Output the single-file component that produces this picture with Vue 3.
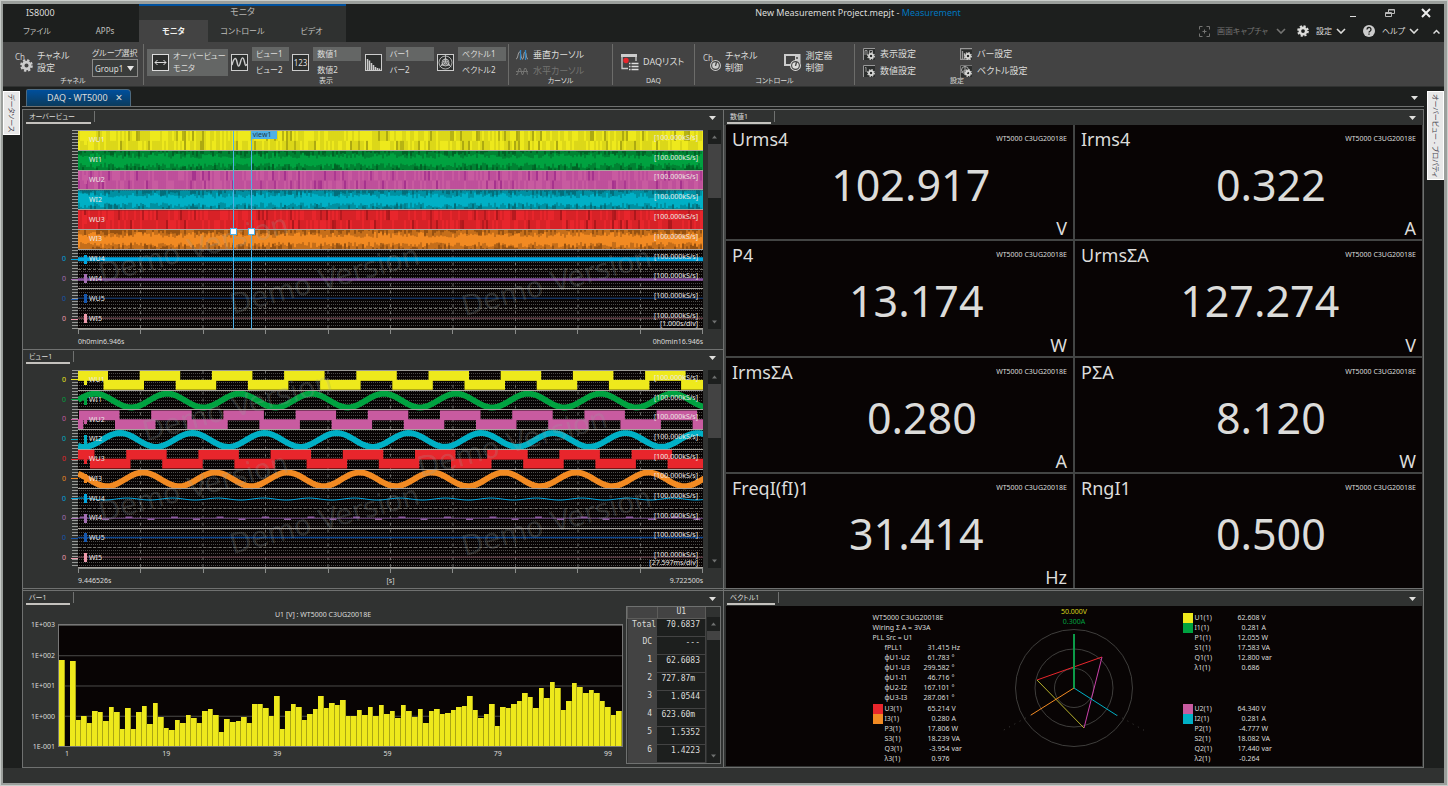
<script setup>
import { ref } from 'vue'

const group = ref('Group1')
const activeTab = ref('モニタ')

const contextTabs = ['モニタ', 'コントロール', 'ビデオ']

const viewPairs = [
  { icon: 'wave', names: ['ビュー1', 'ビュー2'], size: 'narrow' },
  { icon: 'digits', names: ['数値1', '数値2'], size: 'wide' },
  { icon: 'bars', names: ['バー1', 'バー2'], size: 'wide' },
  { icon: 'vector', names: ['ベクトル1', 'ベクトル2'], size: 'wide' },
]

const channels = [
  { name: 'WU1', color: '#eee91c', dark: '#77740a' },
  { name: 'WI1', color: '#00a240', dark: '#003c18' },
  { name: 'WU2', color: '#c85ba0', dark: '#8a1280' },
  { name: 'WI2', color: '#00b0c6', dark: '#06484e' },
  { name: 'WU3', color: '#e8262c', dark: '#7c0d10' },
  { name: 'WI3', color: '#f28a22', dark: '#5e2f08' },
  { name: 'WU4', color: '#00a6e0', dark: '#0080b4' },
  { name: 'WI4', color: '#a56fb4', dark: '#6b3a86' },
  { name: 'WU5', color: '#1557b0', dark: '#10305e' },
  { name: 'WI5', color: '#f09aac', dark: '#93606a' },
]

const ROW = 20
const PERIOD = 72.2

// repeatable noise so the overview looks the same on each load
let seed = 7
const noise = () => {
  seed = (seed * 16807) % 2147483647
  return seed / 2147483647
}

const overviewBands = channels.slice(0, 6).map((ch, i) => {
  const top = i * ROW
  const isCurrent = i % 2 === 1
  let soft = ''
  let hard = ''
  for (let x = 1; x < 625; x += 2) {
    if (isCurrent) {
      soft += `M${x} ${top}v${(2 + noise() * 6).toFixed(1)}M${x} ${top + ROW}v-${(2 + noise() * 6).toFixed(1)}`
      if (noise() < 0.6) hard += `M${x} ${top}v${(noise() * 6).toFixed(1)}`
      if (noise() < 0.5) hard += `M${x} ${top + ROW}v-${(noise() * 7).toFixed(1)}`
    } else {
      if (noise() < 0.6) soft += `M${x} ${top}v10`
      if (noise() < 0.6) soft += `M${x} ${top + 10}v10`
      if (noise() < 0.1) hard += `M${x} ${top}v10`
      if (noise() < 0.1) hard += `M${x} ${top + 10}v10`
    }
  }
  return { ...ch, top, soft, hard, softness: isCurrent ? 0.6 : 0.3 }
})

const squareWave = (first, row) => {
  const bars = []
  for (let x = first; x < 625; x += PERIOD) {
    bars.push({ x, y: row * ROW, h: 10 })
    bars.push({ x: x + 36, y: row * ROW + 9, h: 10 })
  }
  return bars
}

const sineWave = (peak, row, amp, period = PERIOD) => {
  let d = ''
  for (let x = 0; x <= 627; x += 3) {
    const y = row * ROW + 10 - amp * Math.cos((2 * Math.PI * (x - peak)) / period)
    d += `${x ? 'L' : 'M'}${x} ${y.toFixed(2)}`
  }
  return d
}

const squares = [
  { color: channels[0].color, bars: squareWave(-10.5, 0) },
  { color: channels[2].color, bars: squareWave(1 - PERIOD, 2) },
  { color: channels[4].color, bars: squareWave(-24, 4) },
]
const sines = [
  { color: channels[1].color, d: sineWave(17, 1, 7), w: 6 },
  { color: channels[3].color, d: sineWave(42, 3, 7), w: 6 },
  { color: channels[5].color, d: sineWave(65, 5, 7), w: 6 },
  { color: channels[6].color, d: sineWave(49, 6, 1, 45.5), w: 1 },
]
const pulses = Array.from({ length: 14 }, (_, i) => i * 45.5)

const plots = [
  { id: 'overview', title: 'オーバービュー', from: '0h0min6.946s', unit: '', to: '0h0min16.946s', div: '[1.000s/div]' },
  { id: 'view', title: 'ビュー1', from: '9.446526s', unit: '[s]', to: '9.722500s', div: '[27.597ms/div]' },
]

const readings = [
  { name: 'Urms4', value: '102.917', unit: 'V' },
  { name: 'Irms4', value: '0.322', unit: 'A' },
  { name: 'P4', value: '13.174', unit: 'W' },
  { name: 'UrmsΣA', value: '127.274', unit: 'V' },
  { name: 'IrmsΣA', value: '0.280', unit: 'A' },
  { name: 'PΣA', value: '8.120', unit: 'W' },
  { name: 'FreqI(fI)1', value: '31.414', unit: 'Hz' },
  { name: 'RngI1', value: '0.500', unit: '' },
]

// bar heights on the log axis, 375 = full scale
const harmonics = [
  267, 0, 264, 80, 94, 72, 109, 106, 78, 121, 105, 54, 117, 54, 106, 124, 68, 133, 91, 57,
  51, 81, 70, 97, 87, 72, 107, 114, 97, 43, 85, 73, 76, 91, 70, 129, 129, 118, 93, 156,
  54, 107, 130, 121, 81, 100, 115, 156, 118, 134, 127, 143, 93, 93, 112, 96, 121, 92, 127, 100,
  109, 88, 126, 110, 91, 115, 70, 109, 115, 98, 103, 111, 120, 124, 155, 112, 88, 100, 129, 62,
  121, 117, 129, 141, 164, 151, 119, 181, 148, 199, 181, 111, 138, 196, 184, 164, 175, 165, 141, 120,
  97, 109,
]

const orders = [
  ['Total', '70.6837'],
  ['DC', '---'],
  ['1', '62.6083'],
  ['2', '727.87m '],
  ['3', '1.0544'],
  ['4', '623.60m '],
  ['5', '1.5352'],
  ['6', '1.4223'],
]

const pll = [
  ['fPLL1', '31.415', 'Hz'],
  ['φU1-U2', '61.783', '°'],
  ['φU1-U3', '299.582', '°'],
  ['φU1-I1', '46.716', '°'],
  ['φU2-I2', '167.101', '°'],
  ['φU3-I3', '287.061', '°'],
]
const phase1 = [
  ['U1(1)', '62.608', 'V', '#eee91c'],
  ['I1(1)', '0.281', 'A', '#00a240'],
  ['P1(1)', '12.055', 'W'],
  ['S1(1)', '17.583', 'VA'],
  ['Q1(1)', '12.800', 'var'],
  ['λ1(1)', '0.686', ''],
]
const phase2 = [
  ['U2(1)', '64.340', 'V', '#c85ba0'],
  ['I2(1)', '0.281', 'A', '#00b0c6'],
  ['P2(1)', '-4.777', 'W'],
  ['S2(1)', '18.082', 'VA'],
  ['Q2(1)', '17.440', 'var'],
  ['λ2(1)', '-0.264', ''],
]
const phase3 = [
  ['U3(1)', '65.214', 'V', '#e8262c'],
  ['I3(1)', '0.280', 'A', '#f28a22'],
  ['P3(1)', '17.806', 'W'],
  ['S3(1)', '18.239', 'VA'],
  ['Q3(1)', '-3.954', 'var'],
  ['λ3(1)', '0.976', ''],
]
</script>

<template>
  <div class="frame">
    <svg class="defs" aria-hidden="true">
      <symbol id="gear" viewBox="0 0 16 16">
        <circle cx="8" cy="8" r="4.2" fill="none" stroke="currentColor" stroke-width="3.4" />
        <circle cx="8" cy="8" r="6.6" fill="none" stroke="currentColor" stroke-width="2.4" stroke-dasharray="2.9 2.28" />
      </symbol>
      <symbol id="knob" viewBox="0 0 16 16">
        <circle cx="8" cy="8" r="7.2" fill="#434343" stroke="currentColor" stroke-width="1.5" />
        <circle cx="8" cy="8" r="4.8" fill="currentColor" />
        <path d="M8 8.500L9.500 3" stroke="#434343" stroke-width="2" />
      </symbol>
      <symbol id="chevron" viewBox="0 0 10 6">
        <path d="M1 1l4 4 4-4" fill="none" stroke="currentColor" stroke-width="1.6" />
      </symbol>
      <symbol id="caret" viewBox="0 0 7 4"><path d="M0 0h7L3.5 4z" fill="currentColor" /></symbol>
    </svg>

    <div class="app">
      <header class="titlebar">
        <div class="tabs-plain">
          <span class="brand">IS8000</span>
          <button class="menu-tab">ファイル</button>
          <button class="menu-tab">APPs</button>
        </div>
        <div class="tabs-context">
          <span class="context-name">モニタ</span>
          <button
            v-for="tab in contextTabs"
            :key="tab"
            class="menu-tab"
            :class="{ active: tab === activeTab }"
            @click="activeTab = tab"
          >{{ tab }}</button>
        </div>
        <div class="title-area">
          <div class="title-row">
            <h1>New Measurement Project.mepjt - <em>Measurement</em></h1>
            <div class="window-buttons">
              <button aria-label="最小化">
                <svg width="10" height="10" viewBox="0 0 10 10"><path d="M1 8.500h6" stroke="#ddd" /></svg>
              </button>
              <button aria-label="元に戻す">
                <svg width="10" height="10" viewBox="0 0 10 10" fill="none" stroke="#bbb">
                  <path d="M.5 4.500h6v4h-6zM3.500 4v-2.500h6v4h-2.500M.5 5.500h6M3.500 2h6" />
                </svg>
              </button>
              <button aria-label="閉じる">
                <svg width="10" height="10" viewBox="0 0 10 10"><path d="M1 1l8 8M9 1l-8 8" stroke="#eee" stroke-width="2" /></svg>
              </button>
            </div>
          </div>
          <div class="tools-row">
            <button class="tool dim">
              <svg width="11" height="11" viewBox="0 0 11 11" fill="none" stroke="currentColor">
                <path d="M.5 3.500v-3h3M7.500.5h3v3M10.500 7.500v3h-3M3.500 10.500h-3v-3M5.500 3.500v4M3.500 5.500h4" />
              </svg>
              <span>画面キャプチャ</span>
              <svg class="chev far" width="10" height="6"><use href="#chevron" /></svg>
            </button>
            <button class="tool">
              <svg width="12" height="12"><use href="#gear" /></svg>
              <span>設定</span>
              <svg class="chev" width="10" height="6"><use href="#chevron" /></svg>
            </button>
            <button class="tool help">
              <svg width="12" height="12" viewBox="0 0 12 12">
                <circle cx="6" cy="6" r="6" fill="#ccc" />
                <path d="M4 4.500a2 2 0 1 1 3 1.700q-1 .6-1 1.300M6 8.500v1.300" fill="none" stroke="#1d1f1e" stroke-width="1.300" />
              </svg>
              <span>ヘルプ</span>
              <svg class="chev" width="10" height="6"><use href="#chevron" /></svg>
            </button>
            <button class="collapse" aria-label="リボンを折りたたむ">
              <svg width="7" height="5" viewBox="0 0 7 5"><path d="M.5 4.500l3-3 3 3" fill="none" stroke="#ddd" stroke-width="1.500" /></svg>
            </button>
          </div>
        </div>
      </header>

      <nav class="ribbon">
        <section class="group g-channel">
          <div class="items">
            <button class="big">
              <span class="ch-icon">
                <span>Ch</span>
                <svg width="13" height="13"><use href="#gear" /></svg>
              </span>
              <span>チャネル<br />設定</span>
            </button>
            <div class="field">
              <label for="group-select">グループ選択</label>
              <div class="select-wrap">
                <select id="group-select" v-model="group">
                  <option>Group1</option>
                  <option>Group2</option>
                </select>
                <svg width="7" height="5" viewBox="0 0 7 5"><path d="M0 0h7L3.500 5z" fill="#e6e6e6" /></svg>
              </div>
            </div>
          </div>
          <h2>チャネル</h2>
        </section>

        <section class="group g-display">
          <div class="items">
            <button class="big lit">
              <svg width="17" height="17" viewBox="0 0 17 17" fill="none" stroke="#ddd">
                <rect x=".5" y=".5" width="16" height="16" fill="#2c2e2d" />
                <path d="M3 8.500h11M5.500 6l-2.500 2.500 2.500 2.500M11.500 6l2.500 2.500-2.500 2.500" />
              </svg>
              <span>オーバービュー<br />モニタ</span>
            </button>
            <div v-for="pair in viewPairs" :key="pair.icon" class="pair">
              <svg width="17" height="17" viewBox="0 0 17 17" fill="none" stroke="#ccc">
                <rect x=".5" y=".5" width="16" height="16" fill="#2c2e2d" />
                <path v-if="pair.icon === 'wave'" d="M1 11C3 3 5 3 6 8s2 6 3.500 0 3-5 4 0 1.500 4 2.500 2" stroke-width="1.400" />
                <text v-else-if="pair.icon === 'digits'" x="8.500" y="11.500" class="digits">123</text>
                <path v-else-if="pair.icon === 'bars'" d="M2.500 16v-11M4.500 16v-9.500M6.500 16v-7M8.500 16v-5M10.500 16v-3M12.500 16v-2M14.500 16v-1.500" stroke-width="1.500" />
                <g v-else stroke-width=".8">
                  <circle cx="8.500" cy="8.500" r="6.500" />
                  <circle cx="8.500" cy="8.500" r="3.500" />
                  <circle cx="8.500" cy="8.500" r="1.300" />
                  <path d="M8.500 1v7.500L2.500 13M8.500 8.500l6 4.500M8.500 4l-4 7h8z" />
                </g>
              </svg>
              <div class="stack" :class="pair.size">
                <button class="lit">{{ pair.names[0] }}</button>
                <button>{{ pair.names[1] }}</button>
              </div>
            </div>
          </div>
          <h2>表示</h2>
        </section>

        <section class="group g-cursor">
          <div class="items rows">
            <button class="line">
              <svg width="12" height="10" viewBox="0 0 12 10" fill="none">
                <path d="M0 9c2 0 2-7 3.500-7S5 9 6.500 9 7.500 2 9 2s1 7 3 7" stroke="#aaa" />
                <path d="M4.500 0v10M9.500 0v10" stroke="#2f86c6" stroke-width="1.300" />
              </svg>垂直カーソル
            </button>
            <button class="line dim" disabled>
              <svg width="12" height="10" viewBox="0 0 12 10" fill="none" stroke="currentColor">
                <path d="M0 8.500h1.500L3 2.500h1.500L6 8.500h1L8.500 2.500H10l1.500 6M0 5.500h12" />
              </svg>水平カーソル
            </button>
          </div>
          <h2>カーソル</h2>
        </section>

        <section class="group g-daq">
          <div class="items">
            <button class="big">
              <svg width="18" height="17" viewBox="0 0 18 17" fill="none">
                <path d="M7 14.500H1V1h14v6" stroke="#ccc" stroke-width="1.300" />
                <path d="M0 1.500h16" stroke="#ccc" stroke-width="3" />
                <circle cx="5" cy="6.500" r="2.700" fill="#e8262c" />
                <path d="M8 9.500h1.500M10.500 9.500h7M8 12.500h1.500M10.500 12.500h7M8 15.500h1.500M10.500 15.500h7" stroke="#ddd" stroke-width="1.300" />
              </svg>
              <span>DAQリスト</span>
            </button>
          </div>
          <h2>DAQ</h2>
        </section>

        <section class="group g-control">
          <div class="items">
            <button class="big">
              <span class="ch-icon">
                <span>Ch</span>
                <svg width="11" height="11"><use href="#knob" /></svg>
              </span>
              <span>チャネル<br />制御</span>
            </button>
            <button class="big">
              <svg width="18" height="18" viewBox="0 0 18 18">
                <path d="M1 12V2h14.500v8M0 12h8" fill="none" stroke="#ccc" stroke-width="2" />
                <path d="M11 3h4v5h-4z" fill="#ccc" />
                <circle cx="13" cy="5" r="1" fill="#434343" />
                <svg x="6" y="7" width="11" height="11"><use href="#knob" /></svg>
              </svg>
              <span>測定器<br />制御</span>
            </button>
          </div>
          <h2>コントロール</h2>
        </section>

        <section class="group g-settings">
          <div class="items settings-grid">
            <button class="line">
              <svg width="12" height="12" viewBox="0 0 12 12">
                <path d="M0 0h12v12H0z" fill="#2c2e2d" />
                <path d="M.5 12V.5H12M2 7V2.500h2V7M6.500 4.500v-2h3v2" fill="none" stroke="#999" />
                <svg x="4" y="4" width="8" height="8"><use href="#gear" /></svg>
              </svg>表示設定
            </button>
            <button class="line">
              <svg width="12" height="12" viewBox="0 0 12 12">
                <path d="M0 0h12v12H0z" fill="#2c2e2d" />
                <path d="M.5 0V11.500H11M.5.5H12M2.500 11V3M4.500 11V5" fill="none" stroke="#999" stroke-width="1.300" />
                <svg x="4" y="4" width="8" height="8"><use href="#gear" /></svg>
              </svg>バー設定
            </button>
            <button class="line">
              <svg width="12" height="12" viewBox="0 0 12 12">
                <path d="M0 0h12v12H0z" fill="#2c2e2d" />
                <path d="M.5 12V.5H12M2 3l1-.7V7" fill="none" stroke="#999" />
                <svg x="4" y="4" width="8" height="8"><use href="#gear" /></svg>
              </svg>数値設定
            </button>
            <button class="line">
              <svg width="12" height="12" viewBox="0 0 12 12">
                <path d="M0 0h12v12H0z" fill="#2c2e2d" />
                <path d="M.5 12V.5H12" fill="none" stroke="#777" />
                <circle cx="5" cy="5" r="3.500" fill="none" stroke="#aaa" />
                <path d="M5 1v4L1.500 7.500M5 5l3 2" fill="none" stroke="#aaa" />
                <svg x="4" y="4" width="8" height="8"><use href="#gear" /></svg>
              </svg>ベクトル設定
            </button>
          </div>
          <h2>設定</h2>
        </section>
      </nav>

      <div class="workspace">
        <aside class="dock"><button>データソース</button></aside>

        <main class="center">
          <div class="doc-tabs">
            <div class="doc-tab">
              DAQ - WT5000
              <button aria-label="タブを閉じる">×</button>
            </div>
            <button class="caret-button" aria-label="タブ一覧"><svg width="7" height="4"><use href="#caret" /></svg></button>
          </div>

          <div class="panels">
            <section v-for="plot in plots" :key="plot.id" class="panel" :class="plot.id">
              <header class="panel-head">
                <h3>{{ plot.title }}</h3>
                <button class="caret-button" aria-label="メニュー"><svg width="7" height="4"><use href="#caret" /></svg></button>
              </header>
              <div class="plot-grid">
                <div class="zeros">
                  <span
                    v-for="(ch, i) in channels"
                    :key="ch.name"
                    :style="{ color: ch.color }"
                  ><b v-if="plot.id === 'view' || i > 5">0</b><i v-if="plot.id === 'view' || i > 5"></i></span>
                </div>
                <div class="plot">
                  <svg class="traces" viewBox="0 0 625 200" preserveAspectRatio="none" aria-hidden="true">
                    <path d="M62.500 0v200M125 0v200M187.500 0v200M250 0v200M312.500 0v200M375 0v200M437.500 0v200M500 0v200M562.500 0v200" stroke="#6a6a68" stroke-dasharray="3 4" />
                    <template v-if="plot.id === 'overview'">
                      <g v-for="band in overviewBands" :key="band.name">
                        <rect x="0" :y="band.top" width="625" height="20" :fill="band.color" />
                        <path :d="band.soft" :stroke="band.dark" :opacity="band.softness" />
                        <path :d="band.hard" :stroke="band.dark" opacity=".9" />
                      </g>
                      <path d="M0 129.500h625" stroke="#00a6e0" stroke-width="4" />
                      <path d="M0 150h625" stroke="#8b55a4" stroke-width="2.500" />
                      <path d="M0 169h625" stroke="#12305c" stroke-width="1.500" />
                      <path d="M0 189h625" stroke="#93606a" />
                    </template>
                    <template v-else>
                      <g v-for="square in squares" :key="square.color" :fill="square.color">
                        <rect v-for="(bar, i) in square.bars" :key="i" :x="bar.x" :y="bar.y" width="40.500" :height="bar.h" />
                      </g>
                      <path v-for="sine in sines" :key="sine.color" :d="sine.d" :stroke="sine.color" :stroke-width="sine.w" fill="none" />
                      <path d="M0 149.500h625" stroke="#77508a" />
                      <g stroke="#8d5ca0" stroke-width="1.500">
                        <path v-for="x in pulses" :key="x" :d="`M${x + 2} 148.500h7M${x + 24} 150.500h7`" />
                      </g>
                      <path d="M0 169h625" stroke="#0d448e" stroke-width="1.500" />
                      <path d="M0 189h625" stroke="#80505c" />
                    </template>
                  </svg>
                  <span class="mark m1" aria-hidden="true">Demo Version</span>
                  <span class="mark m2" aria-hidden="true">Demo Version</span>
                  <span class="mark m3" aria-hidden="true">Demo Version</span>
                  <span v-if="plot.id === 'view'" class="mark m4" aria-hidden="true">Demo Version</span>
                  <span v-if="plot.id === 'view'" class="mark m5" aria-hidden="true">Demo Version</span>
                  <div class="channel-rows">
                    <div v-for="ch in channels" :key="ch.name" class="channel">
                      <i :style="{ background: ch.color }"></i>
                      <span class="channel-name">{{ ch.name }}</span>
                      <span class="rate">[100.000kS/s]</span>
                    </div>
                  </div>
                  <span class="per-div">{{ plot.div }}</span>
                  <div v-if="plot.id === 'overview'" class="zoom-range">
                    <span>view1</span>
                    <i></i><i></i>
                  </div>
                </div>
                <div class="scroll">
                  <button aria-label="上へ"><svg width="5" height="4" class="flip"><use href="#caret" /></svg></button>
                  <div class="thumb"></div>
                  <button aria-label="下へ"><svg width="5" height="4"><use href="#caret" /></svg></button>
                </div>
                <div class="axis"><i v-for="n in 10" :key="n"></i></div>
                <div class="times">
                  <span>{{ plot.from }}</span><span>{{ plot.unit }}</span><span>{{ plot.to }}</span>
                </div>
              </div>
            </section>

            <section class="panel bar-panel">
              <header class="panel-head">
                <h3>バー1</h3>
                <button class="caret-button" aria-label="メニュー"><svg width="7" height="4"><use href="#caret" /></svg></button>
              </header>
              <div class="bar-body">
                <div class="chart">
                  <h4>U1 [V] : WT5000 C3UG20018E</h4>
                  <div class="y-axis">
                    <span>1E+003</span><span>1E+002</span><span>1E+001</span><span>1E+000</span><span>1E-001</span>
                  </div>
                  <div class="bars">
                    <i v-for="(h, i) in harmonics" :key="i" :style="{ height: h / 3.75 + '%' }"></i>
                  </div>
                  <div class="x-axis">
                    <span>1</span><span>19</span><span>39</span><span>59</span><span>79</span><span>99</span>
                  </div>
                </div>
                <div class="order-list">
                  <table>
                    <thead>
                      <tr><th></th><th>U1</th></tr>
                    </thead>
                    <tbody>
                      <tr v-for="row in orders" :key="row[0]">
                        <th>{{ row[0] }}</th>
                        <td>{{ row[1] }}</td>
                      </tr>
                    </tbody>
                  </table>
                  <div class="scroll">
                    <button aria-label="上へ"><svg width="5" height="4" class="flip"><use href="#caret" /></svg></button>
                    <div class="thumb short"></div>
                    <button aria-label="下へ"><svg width="5" height="4"><use href="#caret" /></svg></button>
                  </div>
                </div>
              </div>
            </section>

            <section class="panel numeric-panel">
              <header class="panel-head">
                <h3>数値1</h3>
                <button class="caret-button" aria-label="メニュー"><svg width="7" height="4"><use href="#caret" /></svg></button>
              </header>
              <div class="readings">
                <article v-for="r in readings" :key="r.name">
                  <h4>{{ r.name }}</h4>
                  <small>WT5000 C3UG20018E</small>
                  <strong>{{ r.value.padStart(9) }}</strong>
                  <span>{{ r.unit }}</span>
                </article>
              </div>
            </section>

            <section class="panel vector-panel">
              <header class="panel-head">
                <h3>ベクトル1</h3>
                <button class="caret-button" aria-label="メニュー"><svg width="7" height="4"><use href="#caret" /></svg></button>
              </header>
              <div class="vector-body">
                <div class="facts left">
                  <div>
                    <p>WT5000 C3UG20018E</p>
                    <p>Wiring Σ A = 3V3A</p>
                    <p>PLL Src = U1</p>
                    <p v-for="row in pll" :key="row[0]" class="fact">
                      <i></i><span>{{ row[0] }}</span><b>{{ row[1] }}</b><span>{{ row[2] }}</span>
                    </p>
                  </div>
                  <div>
                    <p v-for="row in phase3" :key="row[0]" class="fact">
                      <i :style="{ background: row[3] }"></i><span>{{ row[0] }}</span><b>{{ row[1] }}</b><span>{{ row[2] }}</span>
                    </p>
                  </div>
                </div>
                <div class="phasor">
                  <p class="volts">50.000V</p>
                  <p class="amps">0.300A</p>
                  <svg width="160" height="124" viewBox="0 0 160 124" fill="none" role="img" aria-label="ベクトル図">
                    <g stroke="#4c4c4a" stroke-width=".8">
                      <circle cx="80" cy="61" r="58.500" />
                      <circle cx="80" cy="61" r="39" />
                      <circle cx="80" cy="61" r="19.500" />
                      <path d="M37 88L8 104M123 88l30 17" stroke-dasharray="1 5" />
                    </g>
                    <path d="M43 53L108 30" stroke="#e8262c" />
                    <path d="M108 30L90 101" stroke="#c840a8" />
                    <path d="M43 53L90 101" stroke="#b4b02c" />
                    <path d="M80 61L37 88" stroke="#f28a22" />
                    <path d="M80 61l43 27.500" stroke="#00b0c6" />
                    <path d="M80 61V7" stroke="#0c9a48" stroke-width="2" />
                  </svg>
                </div>
                <div class="facts">
                  <div>
                    <p v-for="row in phase1" :key="row[0]" class="fact">
                      <i :style="{ background: row[3] }"></i><span>{{ row[0] }}</span><b>{{ row[1] }}</b><span>{{ row[2] }}</span>
                    </p>
                  </div>
                  <div>
                    <p v-for="row in phase2" :key="row[0]" class="fact">
                      <i :style="{ background: row[3] }"></i><span>{{ row[0] }}</span><b>{{ row[1] }}</b><span>{{ row[2] }}</span>
                    </p>
                  </div>
                </div>
              </div>
            </section>
          </div>
        </main>

        <aside class="dock right"><button>オーバービュー - プロパティ</button></aside>
      </div>

      <footer class="status"></footer>
    </div>
  </div>
</template>

<style>
body {
  background: #1d1f1e;
}
</style>

<style scoped>
.frame {
  box-sizing: border-box;
  height: 100vh;
  min-height: 640px;
  padding: 1px;
  background: #c9cdca;
  color: #dcdcda;
  font: 9px/12px 'Noto Sans', 'Noto Sans CJK JP', sans-serif;
  font-feature-settings: 'palt';
}

.frame * {
  box-sizing: border-box;
}

.defs {
  position: absolute;
  width: 0;
  height: 0;
}

.app {
  display: flex;
  flex-direction: column;
  height: 100%;
  border: solid #9b9f9c;
  border-width: 3px 3px 2px 2px;
  background: #1d1f1e;
}

h1,
h2,
h3,
h4,
p {
  margin: 0;
  font: inherit;
}

i,
b,
em {
  font-style: normal;
  font-weight: normal;
}

button {
  padding: 0;
  border: 0;
  background: none;
  color: inherit;
  font: inherit;
  font-feature-settings: inherit;
  text-align: left;
  white-space: nowrap;
}

svg {
  display: block;
  flex: none;
}

/* title bar */
.titlebar {
  display: flex;
  height: 38px;
}

.tabs-plain,
.tabs-context {
  display: grid;
  grid-template-rows: 16px 22px;
}

.tabs-plain {
  grid-template-columns: repeat(2, 68px);
}

.brand {
  grid-column: 1 / -1;
  padding-left: 23px;
  line-height: 17px;
}

.tabs-context {
  grid-template-columns: repeat(3, 69px);
  border-top: 2px solid #00519e;
  grid-template-rows: 14px 22px;
  background: #2f3130;
}

.context-name {
  grid-column: 1 / -1;
  text-align: center;
  color: #b4b4b2;
}

.menu-tab {
  text-align: center;
  font-size: 8px;
  color: #c0c0be;
}

.menu-tab.active {
  background: #434343;
  color: #f0f0ee;
  font-weight: bold;
}

.title-area {
  flex: 1;
  display: flex;
  flex-direction: column;
}

.title-row {
  display: flex;
  height: 16px;
}

.title-row h1 {
  flex: 1;
  padding-left: 22px;
  text-align: center;
  line-height: 17px;
}

.title-row em {
  color: #0076be;
}

.window-buttons {
  display: flex;
  gap: 26px;
  width: 96px;
  padding-left: 1px;
}

.window-buttons svg {
  margin-top: 1px;
}

.tools-row {
  display: flex;
  justify-content: flex-end;
  align-items: center;
  height: 22px;
  padding-right: 4px;
  font-size: 8px;
}

.tool {
  display: flex;
  align-items: center;
  gap: 7px;
  margin-right: 11px;
}

.tool.help {
  margin: 0 14px 0 6px;
}

.chev {
  margin-left: -3px;
}

.chev.far {
  margin-left: 1px;
}

.dim {
  color: #747472;
}

/* ribbon */
.ribbon {
  display: flex;
  height: 45px;
  background: #434343;
  border-bottom: 1px solid #303231;
}

.group {
  display: flex;
  flex-direction: column;
  margin: 2px 0 1px;
  padding-top: 3px;
  border-right: 1px solid #6c6c6a;
}

.group h2 {
  text-align: center;
  font-size: 7px;
  line-height: 8px;
}

.items {
  display: flex;
  align-items: center;
  height: 31px;
}

.g-channel {
  width: 141px;
}

.g-channel .items {
  justify-content: space-between;
  padding: 0 5px 0 12px;
}

.g-display {
  width: 365px;
}

.g-display .items {
  justify-content: space-between;
  padding: 0 2px 0 3px;
  font-size: 8px;
}

.g-cursor {
  width: 104px;
}

.g-daq {
  width: 82px;
}

.g-daq .items {
  padding-left: 8px;
}

.g-control {
  width: 160px;
}

.g-control .items {
  gap: 26px;
  padding-left: 8px;
}

.g-settings {
  width: 204px;
  border-right: 0;
}

.big {
  display: flex;
  align-items: center;
  gap: 4px;
  height: 27px;
}

.lit {
  background: #646665;
}

.big.lit {
  padding: 0 2px 0 5px;
}

/* "Ch" with a gear or knob at its lower right */
.ch-icon {
  display: grid;
  width: 18px;
  color: #ccc;
  font-size: 8px;
  line-height: 10px;
}

.ch-icon svg {
  justify-self: end;
  margin-top: -3px;
}

.digits {
  fill: #ddd;
  stroke: none;
  font: 8px 'Noto Sans', sans-serif;
  text-anchor: middle;
}

.field label {
  display: block;
  font-size: 8px;
  line-height: 12px;
}

.select-wrap {
  position: relative;
}

.select-wrap svg {
  position: absolute;
  top: 7px;
  right: 4px;
  pointer-events: none;
}

select {
  display: block;
  width: 46px;
  height: 18px;
  padding: 0 2px;
  appearance: none;
  border: 1px solid #8a8a88;
  border-radius: 0;
  background: #3a3c3b;
  color: inherit;
  font: 8px 'Noto Sans', sans-serif;
}

.pair {
  display: flex;
  align-items: center;
  gap: 4px;
}

.stack {
  display: flex;
  flex-direction: column;
  gap: 2px;
}

.stack.narrow {
  width: 37px;
}

.stack.wide {
  width: 48px;
}

.stack button {
  height: 14px;
  padding-left: 4px;
}

.items.rows {
  flex-direction: column;
  align-items: flex-start;
  gap: 4px;
  padding: 2px 0 0 7px;
}

.line {
  display: flex;
  align-items: center;
  gap: 5px;
}

.items.settings-grid {
  display: grid;
  grid-template-columns: 97px 1fr;
  gap: 5px 0;
  align-content: center;
  padding-left: 8px;
}

/* docks and document tabs */
.workspace {
  flex: 1;
  display: flex;
  min-height: 0;
}

.dock {
  width: 19px;
  padding-top: 4px;
}

.dock.right {
  width: 20px;
  padding-left: 3px;
}

.dock button {
  width: 17px;
  padding: 2px 0;
  background: #e8e8e8;
  border: 1px solid #fff;
  color: #44424e;
  font-size: 7px;
  line-height: 15px;
  writing-mode: vertical-rl;
  text-orientation: sideways;
}

.center {
  flex: 1;
  display: flex;
  flex-direction: column;
  min-width: 0;
}

.doc-tabs {
  display: flex;
  justify-content: space-between;
  align-items: center;
  height: 20px;
  margin-bottom: 2px;
  padding: 2px 6px 0 4px;
  border-bottom: 1px solid #6f7170;
}

.doc-tab {
  display: flex;
  align-items: center;
  gap: 8px;
  height: 17px;
  padding: 0 8px 0 20px;
  border: 1px solid #4d6a80;
  border-bottom: 0;
  border-radius: 2px 4px 0 0;
  background: linear-gradient(#004f9c, #0b3b5c);
}

.doc-tab button {
  font-size: 12px;
}

.caret-button {
  color: #e0e0de;
}

/* panels */
.panels {
  flex: 1;
  display: grid;
  grid-template: 240fr 239fr 179fr / 701fr 701fr;
  min-height: 0;
  border: solid #6f7170;
  border-width: 0 1px 1px;
}

.panel {
  display: flex;
  flex-direction: column;
  min-width: 0;
  min-height: 0;
  border-top: 1px solid #6f7170;
  background: #303231;
}

.bar-panel {
  grid-area: 3 / 1;
  border-top: 3px double #6f7170;
}

.numeric-panel {
  grid-area: 1 / 2 / 3 / 3;
  border-left: 1px solid #6f7170;
}

.vector-panel {
  grid-area: 3 / 2;
  border-top: 3px double #6f7170;
  border-left: 1px solid #6f7170;
}

.panel-head {
  display: flex;
  align-items: center;
  justify-content: space-between;
  flex: none;
  height: 15px;
  padding: 0 7px 0 3px;
}

.panel-head h3 {
  position: relative;
  min-width: 44px;
  height: 13px;
  padding: 0 16px 0 3px;
  border-bottom: 2px solid #c4c2be;
  font-size: 7px;
  line-height: 12px;
}

.panel-head h3::after {
  content: '';
  position: absolute;
  top: 0;
  right: -4px;
  height: 11px;
  border-right: 1px solid #6f7170;
}

.plot-grid {
  flex: 1;
  display: grid;
  grid-template: 1fr 5px 15px / 55px 1fr 20px;
  min-height: 0;
  padding-top: 5px;
}

.zeros {
  display: flex;
  flex-direction: column;
  background: repeating-linear-gradient(#999b98 0 1px, transparent 1px 3px) right / 6px 100% no-repeat;
}

.zeros span {
  flex: 1;
  display: flex;
  align-items: center;
  justify-content: flex-end;
  gap: 5px;
  font-size: 7px;
}

.zeros i {
  width: 7px;
  height: 1px;
  background: currentColor;
}

.plot {
  position: relative;
  overflow: hidden;
  border-top: 1px solid #9c9a96;
  background: repeating-linear-gradient(90deg, #080404 0 1px, transparent 1px 2px),
    repeating-linear-gradient(#080404 0 2px, #4c4b49 2px 3px);
}

.traces,
.channel-rows {
  position: absolute;
  inset: 0;
  width: 100%;
  height: 100%;
}

.channel-rows {
  display: flex;
  flex-direction: column;
}

.channel {
  flex: 1;
  display: flex;
  align-items: center;
  gap: 2px;
  padding: 0 5px 0 6px;
  border-bottom: 1px solid #a8a49e;
  color: #ece8e4;
  font-size: 7px;
}

.channel:nth-child(7),
.channel:nth-child(9) {
  border-bottom: 1px dashed #77756f;
}

.channel i {
  width: 3px;
  height: 9px;
}

.rate {
  margin-left: auto;
  padding-bottom: 5px;
}

.per-div {
  position: absolute;
  right: 5px;
  bottom: 1px;
  color: #ece8e4;
  font-size: 7px;
  line-height: 8px;
}

.mark {
  position: absolute;
  color: rgba(150, 160, 160, 0.24);
  font: 28px/28px 'DejaVu Sans', sans-serif;
  transform: rotate(-15deg);
  transform-origin: left bottom;
  white-space: nowrap;
}

.m1 {
  left: 4%;
  top: 65%;
}

.m2 {
  left: 25%;
  top: 81%;
}

.m3 {
  left: 62%;
  top: 82%;
}

.m4 {
  left: 11%;
  top: 24%;
}

.m5 {
  left: 55%;
  top: 42%;
}

/* range shown in the detail view */
.zoom-range {
  position: absolute;
  top: 0;
  bottom: 0;
  left: 24.8%;
  width: 3%;
  border: solid #4fb0e6;
  border-width: 0 1px;
}

.zoom-range span {
  position: absolute;
  left: 100%;
  padding: 0 6px 0 2px;
  background: #4fb0e6;
  color: #1d3a50;
  font-size: 7px;
  line-height: 8px;
}

.zoom-range i {
  position: absolute;
  top: 49%;
  left: -4px;
  width: 7px;
  height: 7px;
  border: 1px solid #4fb0e6;
  background: #fff;
}

.zoom-range i:last-child {
  left: auto;
  right: -4px;
}

.scroll {
  display: flex;
  flex-direction: column;
  width: 13px;
  margin-left: 5px;
  background: #1d1f1e;
  color: #6f7170;
}

.scroll button {
  display: flex;
  align-items: center;
  justify-content: center;
  height: 14px;
}

.scroll button:last-child {
  margin-top: auto;
}

.flip {
  transform: scaleY(-1);
}

.thumb {
  height: 54px;
  background: #434343;
}

.thumb.short {
  height: 9px;
}

.axis {
  grid-column: 2;
  display: flex;
  border: solid #8a8c8a;
  border-width: 1px 0 0 1px;
}

.axis i {
  flex: 1;
  border-right: 1px solid #8a8c8a;
}

.times {
  grid-column: 2;
  display: flex;
  justify-content: space-between;
  font-size: 7px;
  line-height: 16px;
}

/* harmonic bars */
.bar-body {
  flex: 1;
  display: flex;
  min-height: 0;
  padding-bottom: 3px;
}

.chart {
  flex: 1;
  display: grid;
  grid-template: 18px 1fr 17px / 35px 1fr;
  padding-right: 3px;
  font-size: 7px;
}

.chart h4 {
  grid-column: 1 / -1;
  text-align: center;
  line-height: 18px;
}

.y-axis {
  display: flex;
  flex-direction: column;
  justify-content: space-between;
  margin: -3px 3px -4px 0;
  text-align: right;
  line-height: 8px;
}

.bars {
  display: flex;
  align-items: flex-end;
  border: 1px solid #777;
  background: linear-gradient(#4c4c4a 1px, #080404 1px) 0 0 / 100% 25%;
}

.bars i {
  flex: 1;
  border-right: 1px solid #aaa614;
  background: #eee91c;
}

.x-axis {
  grid-column: 2;
  display: grid;
  grid-template-columns: 97fr 111fr 110fr 110fr 110fr 19fr;
  padding-left: 7px;
  line-height: 13px;
}

.order-list {
  display: flex;
  width: 95px;
  margin-right: 2px;
  border: 1px solid #6f7170;
  font: 8px/12px 'DejaVu Sans Mono', monospace;
}

.order-list table {
  flex: 1;
  border-collapse: collapse;
}

.order-list th {
  width: 27px;
  padding: 0;
  background: #434343;
  font-weight: normal;
  text-align: center;
}

.order-list thead th {
  height: 11px;
  border: 1px solid #5c5c5a;
  border-width: 0 1px 1px;
  line-height: 10px;
}

.order-list tbody th {
  padding: 0 5px 0 0;
  text-align: right;
  vertical-align: top;
}

.order-list tbody tr:first-child th {
  padding: 0 1px 0 0;
}

.order-list td {
  height: 18px;
  padding: 0 5px 0 0;
  border: solid #434343;
  border-width: 0 1px 1px 0;
  background: #1d1f1e;
  text-align: right;
  vertical-align: top;
  white-space: pre;
}

.order-list .scroll {
  margin: 10px 0 0 1px;
}

/* numeric panel */
.readings {
  flex: 1;
  display: grid;
  grid-template: repeat(4, 1fr) / 1fr 1fr;
  gap: 2px;
  padding: 0 1px 0 2px;
  background: #434544;
}

.readings article {
  display: grid;
  grid-template: 28px 1fr 22px / 1fr auto;
  padding: 0 6px;
  background: #080404;
}

.readings h4 {
  font-size: 18px;
  line-height: 28px;
}

.readings small {
  font-size: 7px;
  line-height: 28px;
}

.readings strong {
  grid-column: 1 / -1;
  align-self: center;
  justify-self: center;
  font-size: 43px;
  font-weight: normal;
  line-height: 50px;
  white-space: pre;
}

.readings article > span {
  grid-column: 2;
  justify-self: end;
  font-size: 18px;
  line-height: 22px;
}

/* vector panel */
.vector-body {
  flex: 1;
  display: grid;
  grid-template-columns: 1fr 93px 217px 93px 1fr;
  margin: 0 1px 1px 2px;
  background: #080404;
  font-size: 7px;
  line-height: 10px;
}

.facts {
  display: flex;
  flex-direction: column;
  justify-content: space-between;
  grid-column: 4;
  padding: 7px 0 2px;
}

.facts.left {
  grid-column: 2;
}

.fact {
  display: grid;
  grid-template-columns: 10px 27px 36px 1fr;
  column-gap: 2px;
}

.fact b {
  text-align: right;
}

.phasor {
  display: flex;
  flex-direction: column;
  align-items: center;
  padding-top: 1px;
}

.volts {
  color: #d8d41c;
}

.amps {
  color: #00a240;
}

.status {
  flex: none;
  height: 15px;
  background: #303231;
}
</style>
